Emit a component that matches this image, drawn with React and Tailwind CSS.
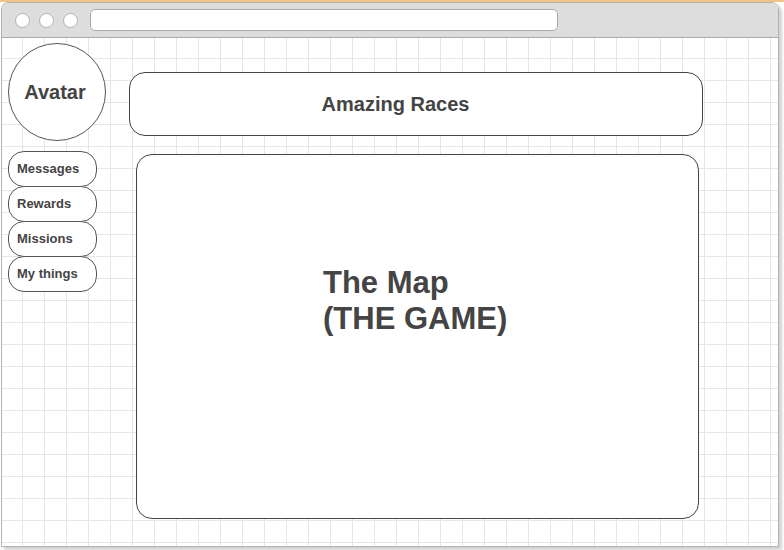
const navItems = ['Messages', 'Rewards', 'Missions', 'My things'];

function TitleBar() {
  return (
    <div className="flex items-center h-[35px] pl-[13px] bg-[#dddddd] border-b border-[#a9a9a9] rounded-t-[6px]">
      <div className="flex gap-[9px]">
        <span className="w-[15px] h-[15px] rounded-full bg-white border border-[#b0b0b0]"></span>
        <span className="w-[15px] h-[15px] rounded-full bg-white border border-[#b0b0b0]"></span>
        <span className="w-[15px] h-[15px] rounded-full bg-white border border-[#b0b0b0]"></span>
      </div>
      <div className="ml-[12px] w-[468px] h-[22px] bg-white border border-[#aaaaaa] rounded-[5px]"></div>
    </div>
  );
}

export default function App() {
  return (
    <div
      className="w-[784px] h-[550px] bg-white overflow-hidden text-[#444444]"
      style={{ fontFamily: '"Liberation Sans", Arial, sans-serif' }}
    >
      <div className="h-[2px] bg-[#f7c47f]"></div>
      <div className="ml-[1px] w-[778px] h-[545px] border border-[#b3b3b3] rounded-t-[7px] shadow-[3px_3px_3px_rgba(0,0,0,0.18)] flex flex-col">
        <TitleBar />
        <div className="flex-1 flex bg-white bg-[linear-gradient(to_right,#e6e6e6_1px,transparent_1px),linear-gradient(to_bottom,#e6e6e6_1px,transparent_1px)] bg-[size:22px_22px] bg-[position:20px_20px]">
          <div className="ml-[6px] mt-[5px] flex flex-col w-[98px]">
            <div className="w-[98px] h-[98px] rounded-full border border-[#555555] bg-white flex items-center justify-center pr-[4px]">
              <span className="text-[20px] font-bold">Avatar</span>
            </div>
            <div className="mt-[10px] flex flex-col">
              {navItems.map((item, i) => (
                <div
                  key={item}
                  className={`w-[89px] h-[36px] rounded-[16px] border border-[#555555] bg-white flex items-center pl-[8px] ${i > 0 ? '-mt-px' : ''}`}
                >
                  <span className="text-[13px] font-bold">{item}</span>
                </div>
              ))}
            </div>
          </div>

          <div className="ml-[23px] flex flex-col">
            <div className="mt-[34px] w-[574px] h-[64px] rounded-[16px] border border-[#444444] bg-white flex items-center justify-center pr-[41px]">
              <span className="text-[20px] font-bold">Amazing Races</span>
            </div>
            <div className="mt-[18px] ml-[7px] w-[563px] h-[365px] rounded-[16px] border border-[#444444] bg-white pl-[186px] pt-[110px]">
              <p className="text-[31px] leading-[36px] font-bold">
                The Map
                <br />
                (THE GAME)
              </p>
            </div>
          </div>
        </div>
      </div>
    </div>
  );
}
